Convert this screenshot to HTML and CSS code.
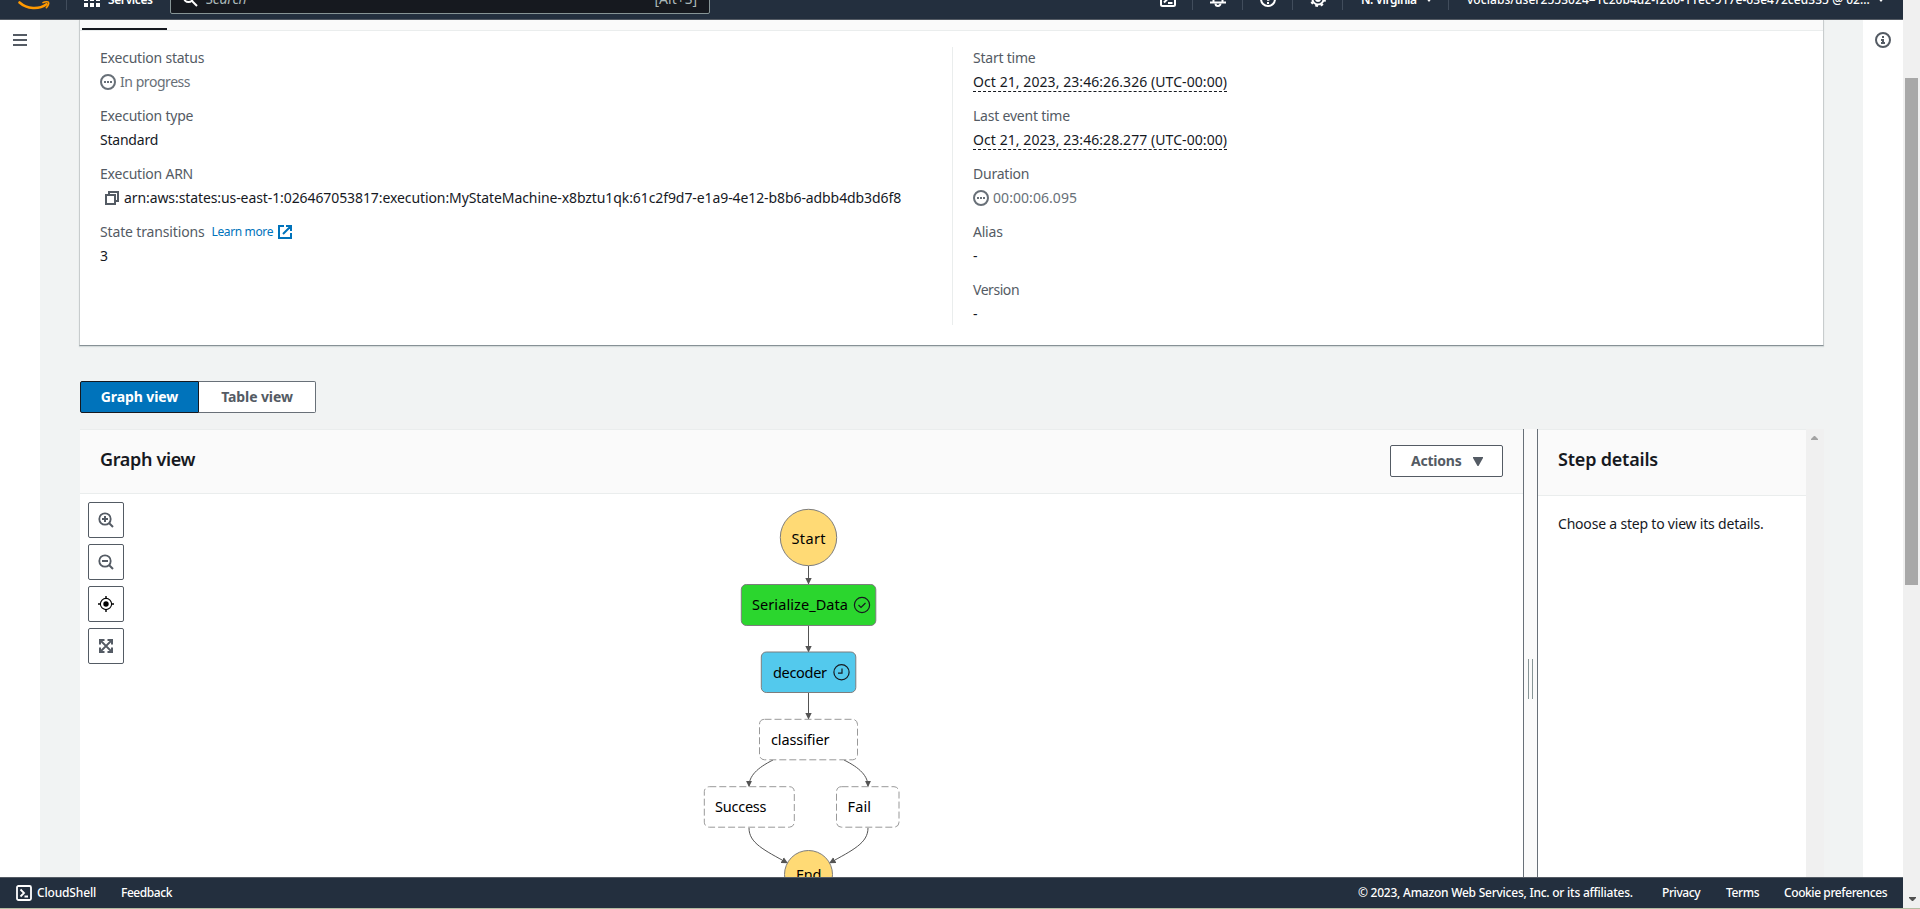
FILE: index.html
```html
<!DOCTYPE html>
<html lang="en">
<head>
<meta charset="utf-8">
<title>Step Functions execution</title>
<link rel="stylesheet" href="styles.css">
</head>
<body>
<div class="screen">
  <div class="app">
    <header class="topbar">
      <div class="topbar-inner">
        <svg class="logo" width="32" height="22" viewBox="0 0 32 22"><path d="M1.500 10.500C9 17.200 21 17.800 28.500 12.200" fill="none" stroke="#f90" stroke-width="2.600" stroke-linecap="round"/><path d="M25 10.600c2-1.200 5.200-1 5.600-.3.500.8-.4 3.700-2.200 5.300" fill="none" stroke="#f90" stroke-width="1.600" stroke-linecap="round"/></svg>
        <span class="rule rule-logo"></span>
        <svg class="grid-icon" width="16" height="16" viewBox="0 0 16 16" fill="#fff"><path d="M0 0h4v4H0zM6 0h4v4H6zM12 0h4v4h-4zM0 6h4v4H0zM6 6h4v4H6zM12 6h4v4h-4zM0 12h4v4H0zM6 12h4v4H6zM12 12h4v4h-4z"/></svg>
        <span class="services">Services</span>
        <div class="search">
          <svg width="16" height="16" viewBox="0 0 16 16" fill="none" stroke="#fff" stroke-width="2"><circle cx="6.500" cy="6.500" r="4.500"/><path d="M10 10l5 5"/></svg>
          <span class="search-hint">Search</span>
          <span class="search-key">[Alt+S]</span>
        </div>
        <div class="tools">
          <span class="tool"><svg width="16" height="16" viewBox="0 0 16 16" fill="none" stroke="#fff" stroke-width="2"><rect x="1" y="1" width="14" height="14" rx="1.500"/><path d="M4 4.500l3.500 3.500L4 11.500M8 12h4.500"/></svg></span>
          <span class="tool"><svg width="16" height="16" viewBox="0 0 16 16" fill="none" stroke="#fff" stroke-width="2"><path d="M0 11.500h16M3.500 11V6a4.500 4.500 0 0 1 9 0v5"/><path d="M5.500 12.500a2.500 2.500 0 0 0 5 0"/></svg></span>
          <span class="tool"><svg width="16" height="16" viewBox="0 0 16 16" fill="none" stroke="#fff" stroke-width="2"><circle cx="8" cy="8" r="7"/><path d="M6 6.500a2 2 0 1 1 2 2v1.200M8 11v2"/></svg></span>
          <span class="tool"><svg width="16" height="16" viewBox="0 0 16 16" fill="none" stroke="#fff"><circle cx="8" cy="8" r="5.500" stroke-width="2"/><circle cx="8" cy="8" r="7" stroke-width="2" stroke-dasharray="2.750 2.750"/><circle cx="8" cy="8" r="2" stroke-width="2"/></svg></span>
          <span class="region">N. Virginia<svg width="8" height="5" viewBox="0 0 8 5" fill="#fff"><path d="M0 0h8L4 5z"/></svg></span>
          <span class="account"><span class="account-name">voclabs/user2553024=1c20b4d2-f200-11ec-917e-63e472ced335 @ 02...</span><svg width="8" height="5" viewBox="0 0 8 5" fill="#fff"><path d="M0 0h8L4 5z"/></svg></span>
        </div>
      </div>
    </header>

    <div class="body">
      <aside class="rail rail-left">
        <svg width="14" height="12" viewBox="0 0 14 12" fill="#545b64"><path d="M0 0h14v2H0zM0 5h14v2H0zM0 10h14v2H0z"/></svg>
      </aside>

      <main class="content">
        <section class="card">
          <div class="tabs"><span class="tab-active"></span></div>
          <div class="columns">
            <dl class="column">
              <dt>Execution status</dt>
              <dd class="muted tight"><svg class="status" width="16" height="16" viewBox="0 0 16 16"><circle cx="8" cy="8" r="7" fill="none" stroke="#687078" stroke-width="2"/><path d="M4 7h2v2H4zM7 7h2v2H7zM10 7h2v2h-2z" fill="#687078"/></svg>In progress</dd>
              <dt>Execution type</dt>
              <dd>Standard</dd>
              <dt>Execution ARN</dt>
              <dd class="arn"><svg width="14" height="14" viewBox="0 0 14 14" fill="none" stroke="#545b64" stroke-width="2"><path d="M1 4h9v9H1z"/><path d="M4 4V1h9v9h-3"/></svg>arn:aws:states:us-east-1:026467053817:execution:MyStateMachine-x8bztu1qk:61c2f9d7-e1a9-4e12-b8b6-adbb4db3d6f8</dd>
              <dt class="transitions">State transitions<a class="learn">Learn more<svg width="14" height="14" viewBox="0 0 14 14" fill="none" stroke="#0073bb" stroke-width="2"><path d="M6 1H1v12h12V8M8 1h5v5M13 1L5 9"/></svg></a></dt>
              <dd>3</dd>
            </dl>
            <dl class="column column-right">
              <dt>Start time</dt>
              <dd><span class="time">Oct 21, 2023, 23:46:26.326 (UTC-00:00)</span></dd>
              <dt>Last event time</dt>
              <dd><span class="time">Oct 21, 2023, 23:46:28.277 (UTC-00:00)</span></dd>
              <dt>Duration</dt>
              <dd class="muted digits"><svg class="status" width="16" height="16" viewBox="0 0 16 16"><circle cx="8" cy="8" r="7" fill="none" stroke="#687078" stroke-width="2"/><path d="M4 7h2v2H4zM7 7h2v2H7zM10 7h2v2h-2z" fill="#687078"/></svg>00:00:06.095</dd>
              <dt>Alias</dt>
              <dd>-</dd>
              <dt class="tight">Version</dt>
              <dd>-</dd>
            </dl>
          </div>
        </section>

        <div class="segments">
          <span class="segment segment-on">Graph view</span>
          <span class="segment">Table view</span>
        </div>

        <section class="split">
          <div class="graph">
            <div class="pane-head graph-head">
              <h2>Graph view</h2>
              <span class="actions">Actions<svg width="10" height="9" viewBox="0 0 10 9" fill="#545b64"><path d="M0 0h10v1L5.500 9h-1L0 1z"/></svg></span>
            </div>
            <div class="canvas">
              <div class="zoom">
                <span class="zoom-btn"><svg width="16" height="16" viewBox="0 0 16 16" fill="none" stroke="#545b64" stroke-width="2"><circle cx="7" cy="7" r="5.700" stroke-width="1.800"/><path d="M11 11l4 4M7 4v6M4 7h6"/></svg></span>
                <span class="zoom-btn"><svg width="16" height="16" viewBox="0 0 16 16" fill="none" stroke="#545b64" stroke-width="2"><circle cx="7" cy="7" r="5.700" stroke-width="1.800"/><path d="M11 11l4 4M4 7h6"/></svg></span>
                <span class="zoom-btn"><svg width="16" height="16" viewBox="0 0 16 16" fill="none" stroke="#000" stroke-width="1.400"><circle cx="8" cy="8" r="5.600" stroke-width="1.100"/><circle cx="8" cy="8" r="2.700" fill="#000" stroke="none"/><path d="M8 0v3M8 13v3M0 8h3M13 8h3"/></svg></span>
                <span class="zoom-btn"><svg width="16" height="16" viewBox="0 0 16 16" fill="none" stroke="#545b64" stroke-width="2"><path d="M2 2l12 12M14 2L2 14" stroke-width="1.800"/><path d="M2 6.500V2h4.500M9.500 2H14v4.500M14 9.500V14H9.500M6.500 14H2V9.500"/></svg></span>
              </div>
              <svg class="flow" width="240" height="384" viewBox="690 494 240 384">
                <defs><marker id="arrow" markerUnits="userSpaceOnUse" markerWidth="7" markerHeight="7" refX="6" refY="3.500" orient="auto"><path d="M0 .3L6.500 3.500 0 6.700z" fill="#545454"/></marker></defs>
                <g class="edges">
                  <path d="M808.500 566v18"/><path d="M808.500 625v27"/><path d="M808.500 693v26"/>
                  <path d="M773 760C757 768 749 776 749 786.500"/><path d="M844 760C860 768 868 776 868 786.500"/>
                  <path d="M749 828C749 843 764 850 787.500 863"/><path d="M868 828C868 843 853 850 829.500 863"/>
                </g>
                <circle class="terminal" cx="808.500" cy="537.500" r="28.200"/>
                <circle class="terminal" cx="808.500" cy="874.500" r="24"/>
                <rect class="state done" x="741.300" y="584.500" width="134.500" height="41" rx="5"/>
                <rect class="state running" x="761.300" y="652" width="94.500" height="40.500" rx="5"/>
                <rect class="state idle" x="759.500" y="719.300" width="98" height="40.500" rx="5"/>
                <rect class="state idle" x="704.300" y="786.700" width="90" height="40.500" rx="5"/>
                <rect class="state idle" x="836.500" y="786.700" width="62.500" height="40.500" rx="5"/>
                <g class="labels">
                  <text x="791.500" y="544" textLength="34">Start</text>
                  <text x="752" y="610" textLength="96">Serialize_Data</text>
                  <text x="773" y="678" textLength="54">decoder</text>
                  <text x="771" y="745" textLength="58.500">classifier</text>
                  <text x="715" y="812" textLength="51.500">Success</text>
                  <text x="847.500" y="812" textLength="23.500">Fail</text>
                  <text x="796" y="879.500" textLength="25.500">End</text>
                </g>
                <g class="marks"><circle cx="862" cy="605" r="7.600"/><path d="M858.500 605l2.500 2.500 4.500-4.500"/><circle cx="841.500" cy="672.200" r="7.600"/><path d="M842 668.500v4.700h-4"/></g>
              </svg>
            </div>
          </div>
          <div class="divider"><span class="grip"></span></div>
          <div class="details">
            <div class="pane-head details-head"><h2 class="details-title">Step details</h2></div>
            <p>Choose a step to view its details.</p>
          </div>
          <div class="pane-scroll"><svg width="7" height="4" viewBox="0 0 7 4" fill="#a3a3a3"><path d="M3 0h1l3 3v1H0V3z"/></svg></div>
        </section>
      </main>

      <aside class="rail rail-right">
        <svg width="16" height="16" viewBox="0 0 16 16"><circle cx="8" cy="8" r="7" fill="none" stroke="#545b64" stroke-width="2"/><path d="M7 4h2v2H7zM6 7h3v3h1v2H6v-2h1V9H6z" fill="#545b64"/></svg>
      </aside>
    </div>

    <footer class="footer">
      <svg width="16" height="16" viewBox="0 0 16 16" fill="none" stroke="#fff" stroke-width="1.800"><rect x="1" y="1" width="14" height="14" rx="1.500"/><path d="M4.500 4.500L8 8l-3.500 3.500M8.500 11.500H12"/></svg>
      <span class="f-shell">CloudShell</span>
      <span class="f-feedback">Feedback</span>
      <span class="f-copy">© 2023, Amazon Web Services, Inc. or its affiliates.</span>
      <span class="f-privacy">Privacy</span>
      <span class="f-terms">Terms</span>
      <span class="f-cookie">Cookie preferences</span>
    </footer>
  </div>
  <div class="page-scroll">
    <span class="thumb"></span>
    <svg width="7" height="4" viewBox="0 0 7 4" fill="#505050"><path d="M0 0h7v1L4 4H3L0 1z"/></svg>
  </div>
</div>
</body>
</html>
```
FILE: styles.css
```css
* { box-sizing: border-box; }
body {
  margin: 0;
  height: 909px;
  overflow: hidden;
  background: #fff;
  border-bottom: 1px solid #b3bda3;
  font: 14px/22px "Noto Sans", "Open Sans", sans-serif;
  letter-spacing: -0.22px;
  color: #16191f;
}
svg { display: block; flex: none; }
h2, p, dl, dd { margin: 0; }
.screen { display: flex; height: 908px; }
.app { width: 1903px; display: flex; flex-direction: column; }

/* Top bar: the upper half is scrolled out of the window */
.topbar {
  height: 20px;
  flex: none;
  overflow: hidden;
  background: #232f3e;
  border-bottom: 1px solid #545b64;
  color: #fff;
  font-size: 12px;
  font-weight: 600;
}
.topbar-inner { display: flex; align-items: center; height: 44px; margin-top: -23px; }
.logo { margin-left: 18px; margin-top: 7px; }
.rule { width: 1px; height: 22px; background: #414d5c; }
.rule-logo { margin-left: 16px; }
.grid-icon { margin-left: 17px; }
.services { width: 63px; padding: 1px 0 0 8px; letter-spacing: -0.4px; }
.search {
  width: 540px;
  height: 32px;
  margin-left: 7px;
  margin-top: -2px;
  padding: 1px 12px 0 11px;
  display: flex;
  align-items: center;
  background: #16191f;
  border: 1px solid #879596;
  border-radius: 2px;
  color: #aab7b8;
  font-size: 14px;
  font-weight: 400;
}
.search-hint { margin-left: 8px; padding-top: 1px; font-style: italic; }
.search-key { margin-left: auto; padding-top: 1px; letter-spacing: 0; }
.tools { margin-left: auto; display: flex; align-items: center; }
.tool { width: 50px; height: 22px; display: flex; align-items: center; justify-content: center; border-right: 1px solid #414d5c; }
.region { width: 106px; height: 22px; padding: 1px 0 0 18px; display: flex; align-items: center; gap: 8px; border-right: 1px solid #414d5c; letter-spacing: -0.5px; }
.account { width: 454px; padding: 1px 0 0 18px; display: flex; align-items: center; gap: 6px; white-space: nowrap; }
.account-name { width: 404px; font-weight: 500; letter-spacing: 0.05px; }

.body { flex: 1; min-height: 0; display: flex; background: #f1f3f3; }
.rail { width: 40px; flex: none; background: #fff; }
.rail-left { padding: 14px 0 0 13px; }
.rail-right { padding: 12px 0 0 12px; }
.content { width: 1823px; padding: 0 39px 0 40px; display: flex; flex-direction: column; }

/* Execution summary */
.card {
  height: 326px;
  flex: none;
  margin-left: -1px;
  background: #fff;
  border: solid #c8cccd;
  border-width: 0 1px 1px;
  border-bottom-color: #879196;
  box-shadow: 0 1px 1px #d5dbdb;
}
.tabs { height: 11px; display: flex; align-items: flex-end; background: #fafafa; border-bottom: 1px solid #eaeded; }
.tab-active { width: 85px; height: 2px; margin-left: 2px; background: #16191f; }
.columns { display: flex; padding-top: 16px; }
.column { width: 872px; padding: 0 0 0 20px; height: 278px; }
.column-right { width: 870px; padding-left: 20px; border-left: 1px solid #eaeded; }
dt { height: 22px; color: #545b64; }
dd { height: 22px; margin: 2px 0 12px; display: flex; align-items: center; }
.muted { color: #687078; gap: 4px; }
.tight { letter-spacing: -0.45px; }
.digits { letter-spacing: 0.06px; }
.arn { padding-left: 5px; gap: 5px; letter-spacing: -0.09px; white-space: nowrap; }
.transitions { display: flex; align-items: center; letter-spacing: -0.15px; }
.learn { display: flex; align-items: center; gap: 5px; margin-left: 7px; color: #0073bb; font-size: 12px; letter-spacing: -0.37px; }
.time { line-height: 18px; border-bottom: 1px dashed #16191f; letter-spacing: 0.07px; }

.segments { display: flex; flex: none; height: 32px; margin-top: 35px; font-weight: 700; letter-spacing: -0.1px; }
.segment { width: 117px; line-height: 30px; text-align: center; background: #fff; border: 1px solid #687078; border-left: 0; border-radius: 0 2px 2px 0; color: #545b64; }
.segment-on { width: 119px; background: #0073bb; border: 1px solid #16191f; border-radius: 2px 0 0 2px; color: #fff; }

/* Graph and step details */
.split { display: flex; flex: 1; min-height: 0; margin-top: 16px; background: #fff; }
.graph { width: 1443px; display: flex; flex-direction: column; overflow: hidden; }
.pane-head { flex: none; background: #fafafa; border: solid #eaeded; border-width: 1px 0; display: flex; }
h2 { font-size: 18px; line-height: 28px; font-weight: 600; letter-spacing: -0.33px; }
.graph-head { height: 65px; padding: 15px 20px 0; justify-content: space-between; }
.actions { width: 113px; height: 32px; padding-left: 20px; display: flex; align-items: center; gap: 11px; border: 1px solid #545b64; border-radius: 2px; background: #fff; color: #545b64; font-weight: 700; }
.canvas { flex: 1; min-height: 0; display: flex; }
.zoom { width: 44px; padding: 8px 0 0 8px; display: flex; flex-direction: column; gap: 6px; }
.zoom-btn { height: 36px; display: flex; align-items: center; justify-content: center; border: 1px solid #545b64; border-radius: 2px; }
.flow { margin-left: 566px; }
.edges { fill: none; stroke: #545454; stroke-width: 1; }
.edges path { marker-end: url(#arrow); }
.terminal { fill: #ffda75; stroke: #7d7d7d; }
.state { stroke: #7d7d7d; }
.done { fill: #2bd62e; }
.running { fill: #53c9ed; }
.idle { fill: #fff; stroke: #999; stroke-dasharray: 7 3; }
.labels { font-size: 14.5px; fill: #000; letter-spacing: 0; }
.marks { fill: none; stroke: #16191f; stroke-width: 1.2; }
.divider { width: 15px; display: flex; justify-content: center; align-items: flex-start; background: #fafafa; border: solid #687078; border-width: 0 1px; }
.grip { width: 5px; height: 40px; margin-top: 230px; margin-right: 1px; border: solid #879596; border-width: 0 1px; }
.details { width: 268px; }
.details-head { height: 67px; padding: 15px 20px 0; }
.details-title { letter-spacing: -0.2px; }
.details p { padding: 17px 20px; letter-spacing: -0.2px; }
.pane-scroll { width: 18px; padding: 7px 0 0 5px; background: #f0f0f0; }

.footer { height: 31px; flex: none; display: flex; align-items: center; padding-left: 16px; background: #232f3e; border-top: 1px solid #545b64; color: #fff; font-size: 12px; font-weight: 500; white-space: nowrap; }
.f-shell { width: 84px; margin-left: 5px; letter-spacing: -0.16px; }
.f-feedback { letter-spacing: -0.43px; }
.f-copy { width: 304px; margin-left: auto; letter-spacing: -0.24px; }
.f-privacy { width: 64px; letter-spacing: -0.4px; }
.f-terms { width: 58px; letter-spacing: -0.4px; }
.f-cookie { width: 119px; letter-spacing: -0.41px; }

.page-scroll { width: 17px; padding: 78px 0 7px 2px; display: flex; flex-direction: column; justify-content: space-between; background: #f0f0f0; }
.page-scroll svg { margin-left: 4px; }
.thumb { width: 13px; height: 507px; background: #a8a8a8; }
```
